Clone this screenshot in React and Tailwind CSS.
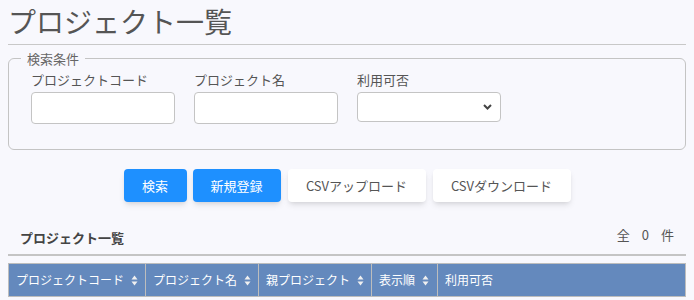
import React from 'react'

const font = { fontFamily: '"Noto Sans CJK JP", "Noto Sans", sans-serif' }

function SortIcon() {
  return (
    <svg width="7" height="11" viewBox="0 0 7 11" className="ml-[7px] inline-block shrink-0">
      <path d="M3.5 0.5 L6.5 4.5 L0.5 4.5 Z" fill="#f0f0f0" />
      <path d="M3.5 10.5 L6.5 6.5 L0.5 6.5 Z" fill="#f0f0f0" />
    </svg>
  )
}

function Field({ label, children }) {
  return (
    <div className="flex w-[144px] flex-col">
      <label className="mb-[5px] text-[13px] leading-[15px] text-[#555]">{label}</label>
      {children}
    </div>
  )
}

export default function App() {
  const columns = [
    { name: 'プロジェクトコード', w: 'w-[136px] shrink-0', sort: true },
    { name: 'プロジェクト名', w: 'w-[113px] shrink-0', sort: true },
    { name: '親プロジェクト', w: 'w-[113px] shrink-0', sort: true },
    { name: '表示順', w: 'w-[66px] shrink-0', sort: true },
    { name: '利用可否', w: 'flex-1', sort: false },
  ]

  return (
    <div className="min-h-[300px] w-[694px] bg-[#f8f8fd] px-2" style={font}>
      <h1 className="pt-[3px] text-[28px] leading-[36px] text-[#555]">プロジェクト一覧</h1>
      <div className="mt-[5px] border-b border-[#c8c8c8]" />

      <fieldset className="mt-[6px] h-[99px] rounded-md border border-[#c4c4c4] px-[22px]">
        <legend className="-ml-[10px] px-[6px] text-[13px] leading-[15px] text-[#666]">検索条件</legend>
        <div className="flex gap-[19px] pt-[6px]">
          <Field label="プロジェクトコード">
            <input className="h-[32px] w-[144px] rounded border border-[#c4c4c4] bg-white" />
          </Field>
          <Field label="プロジェクト名">
            <input className="h-[32px] w-[144px] rounded border border-[#c4c4c4] bg-white" />
          </Field>
          <Field label="利用可否">
            <div className="relative h-[30px] w-[144px] rounded border border-[#c4c4c4] bg-white">
              <svg width="9" height="6" viewBox="0 0 9 6" className="absolute right-[8px] top-[11px]">
                <path d="M1 1 L4.5 4.5 L8 1" stroke="#444" strokeWidth="2" fill="none" />
              </svg>
            </div>
          </Field>
        </div>
      </fieldset>

      <div className="mt-[19px] flex justify-center gap-[6px]">
        <button className="h-[33px] w-[63px] rounded bg-[#1e90ff] text-[13px] text-white shadow-md">検索</button>
        <button className="h-[33px] w-[88px] rounded bg-[#1e90ff] text-[13px] text-white shadow-md">新規登録</button>
        <button className="ml-px h-[33px] w-[138px] rounded bg-white text-[13px] text-[#555] shadow-md">CSVアップロード</button>
        <button className="ml-px h-[33px] w-[138px] rounded bg-white text-[13px] text-[#555] shadow-md">CSVダウンロード</button>
      </div>

      <div className="mt-[23px] flex items-end justify-between border-b-2 border-[#c4c4c4] pb-[6px] pl-[12px] pr-[12px]">
        <div className="text-[13px] font-bold leading-[20px] text-[#444]">プロジェクト一覧</div>
        <div className="mb-[3px] text-[13px] leading-[20px] text-[#555]">
          全<span className="mx-[12px]">0</span>件
        </div>
      </div>

      <div className="mt-[7px] flex h-[34px] border border-[#bdbdbd] bg-[#6489bd] text-[12px] text-white">
        {columns.map((c, i) => (
          <div
            key={c.name}
            className={`${c.w} flex items-center whitespace-nowrap pl-[7px] ${i > 0 ? 'border-l border-[#bdbdbd]' : ''}`}
          >
            {c.name}
            {c.sort && <SortIcon />}
          </div>
        ))}
      </div>
    </div>
  )
}
